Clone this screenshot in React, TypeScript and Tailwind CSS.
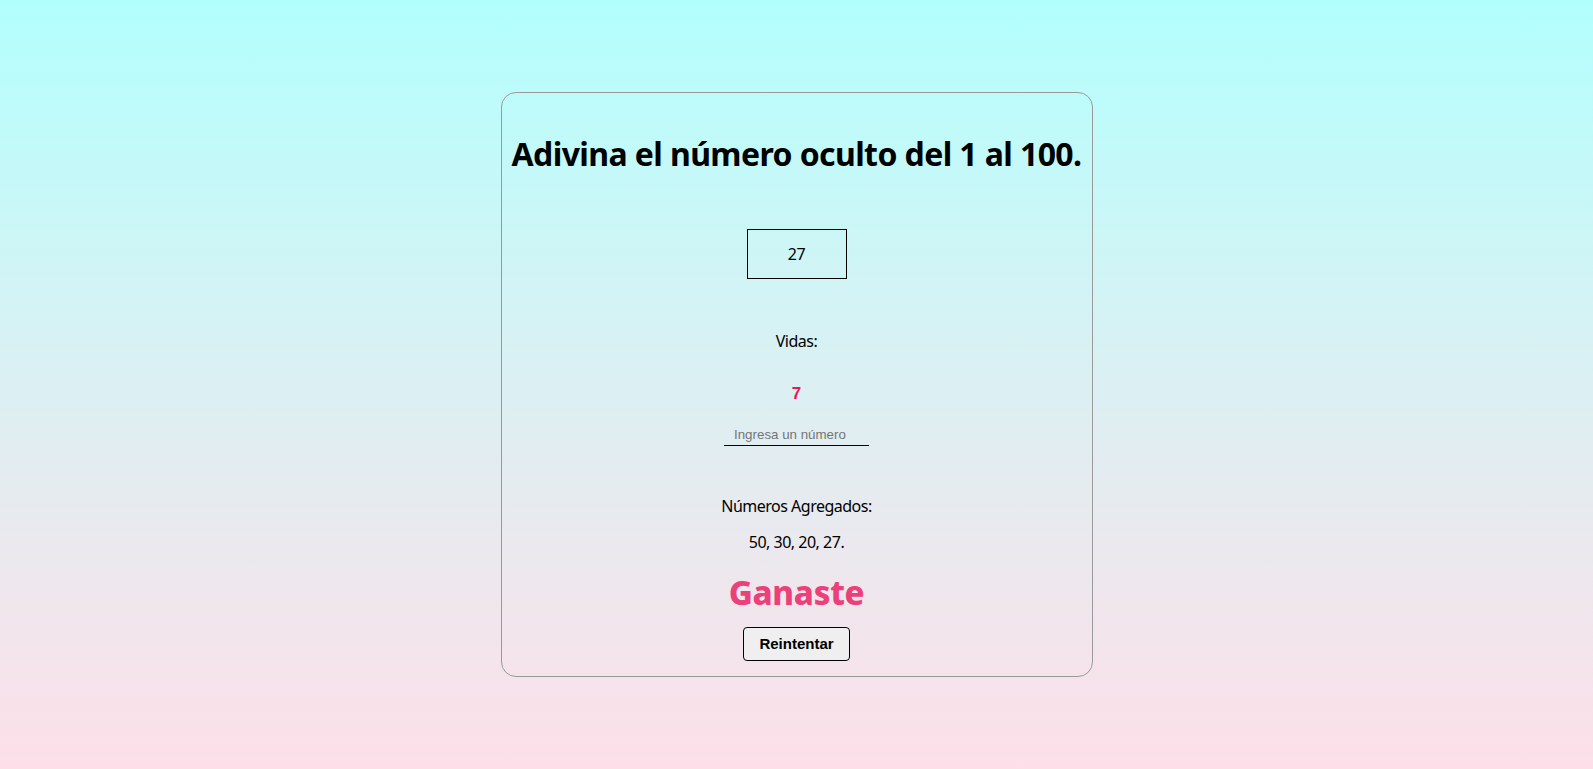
import React from "react";

const guesses = [50, 30, 20, 27];

const App = () => {
  return (
    <div className="w-full h-screen flex items-center justify-center bg-gradient-to-b from-[#b1fffd] to-[#fddfe8] font-['Noto_Sans',sans-serif] text-black">
      <div className="w-[592px] h-[585px] border border-[#9a9a9a] rounded-[15px] flex flex-col items-center pt-[40px]">
        <h1 className="h-[42px] leading-[42px] text-[32px] font-bold tracking-[-0.6px] whitespace-nowrap">
          Adivina el número oculto del 1 al 100.
        </h1>

        <div className="mt-[54px] w-[100px] h-[50px] border border-black flex items-center justify-center text-[16px] tracking-[-0.5px]">
          27
        </div>

        <p className="mt-[51px] h-[22px] leading-[22px] text-[16px] tracking-[-0.5px]">Vidas:</p>

        <p className="mt-[32px] h-[20px] leading-[20px] text-[17px] font-bold text-[#e8185c] font-['Liberation_Sans',sans-serif]">
          7
        </p>

        <input
          type="text"
          placeholder="Ingresa un número"
          className="mt-[20px] w-[145px] h-[22px] pl-[10px] pr-[2px] bg-transparent border-b border-black text-[13.33px] font-['Liberation_Sans',sans-serif] placeholder:text-[#757575] outline-none"
        />

        <p className="mt-[49px] h-[22px] leading-[22px] text-[16px] tracking-[-0.5px]">Números Agregados:</p>

        <p className="mt-[14px] h-[22px] leading-[22px] text-[16px] tracking-[-0.5px]">{guesses.join(", ")}.</p>

        <h2 className="mt-[20px] h-[40px] leading-[40px] text-[33px] font-extrabold tracking-[-0.3px] text-[#ec407a]">
          Ganaste
        </h2>

        <button className="mt-[14px] h-[34px] px-[15px] bg-[#efefef] border border-black rounded-[4px] text-[15px] font-bold font-['Liberation_Sans',sans-serif]">
          Reintentar
        </button>
      </div>
    </div>
  );
};

export default App;
